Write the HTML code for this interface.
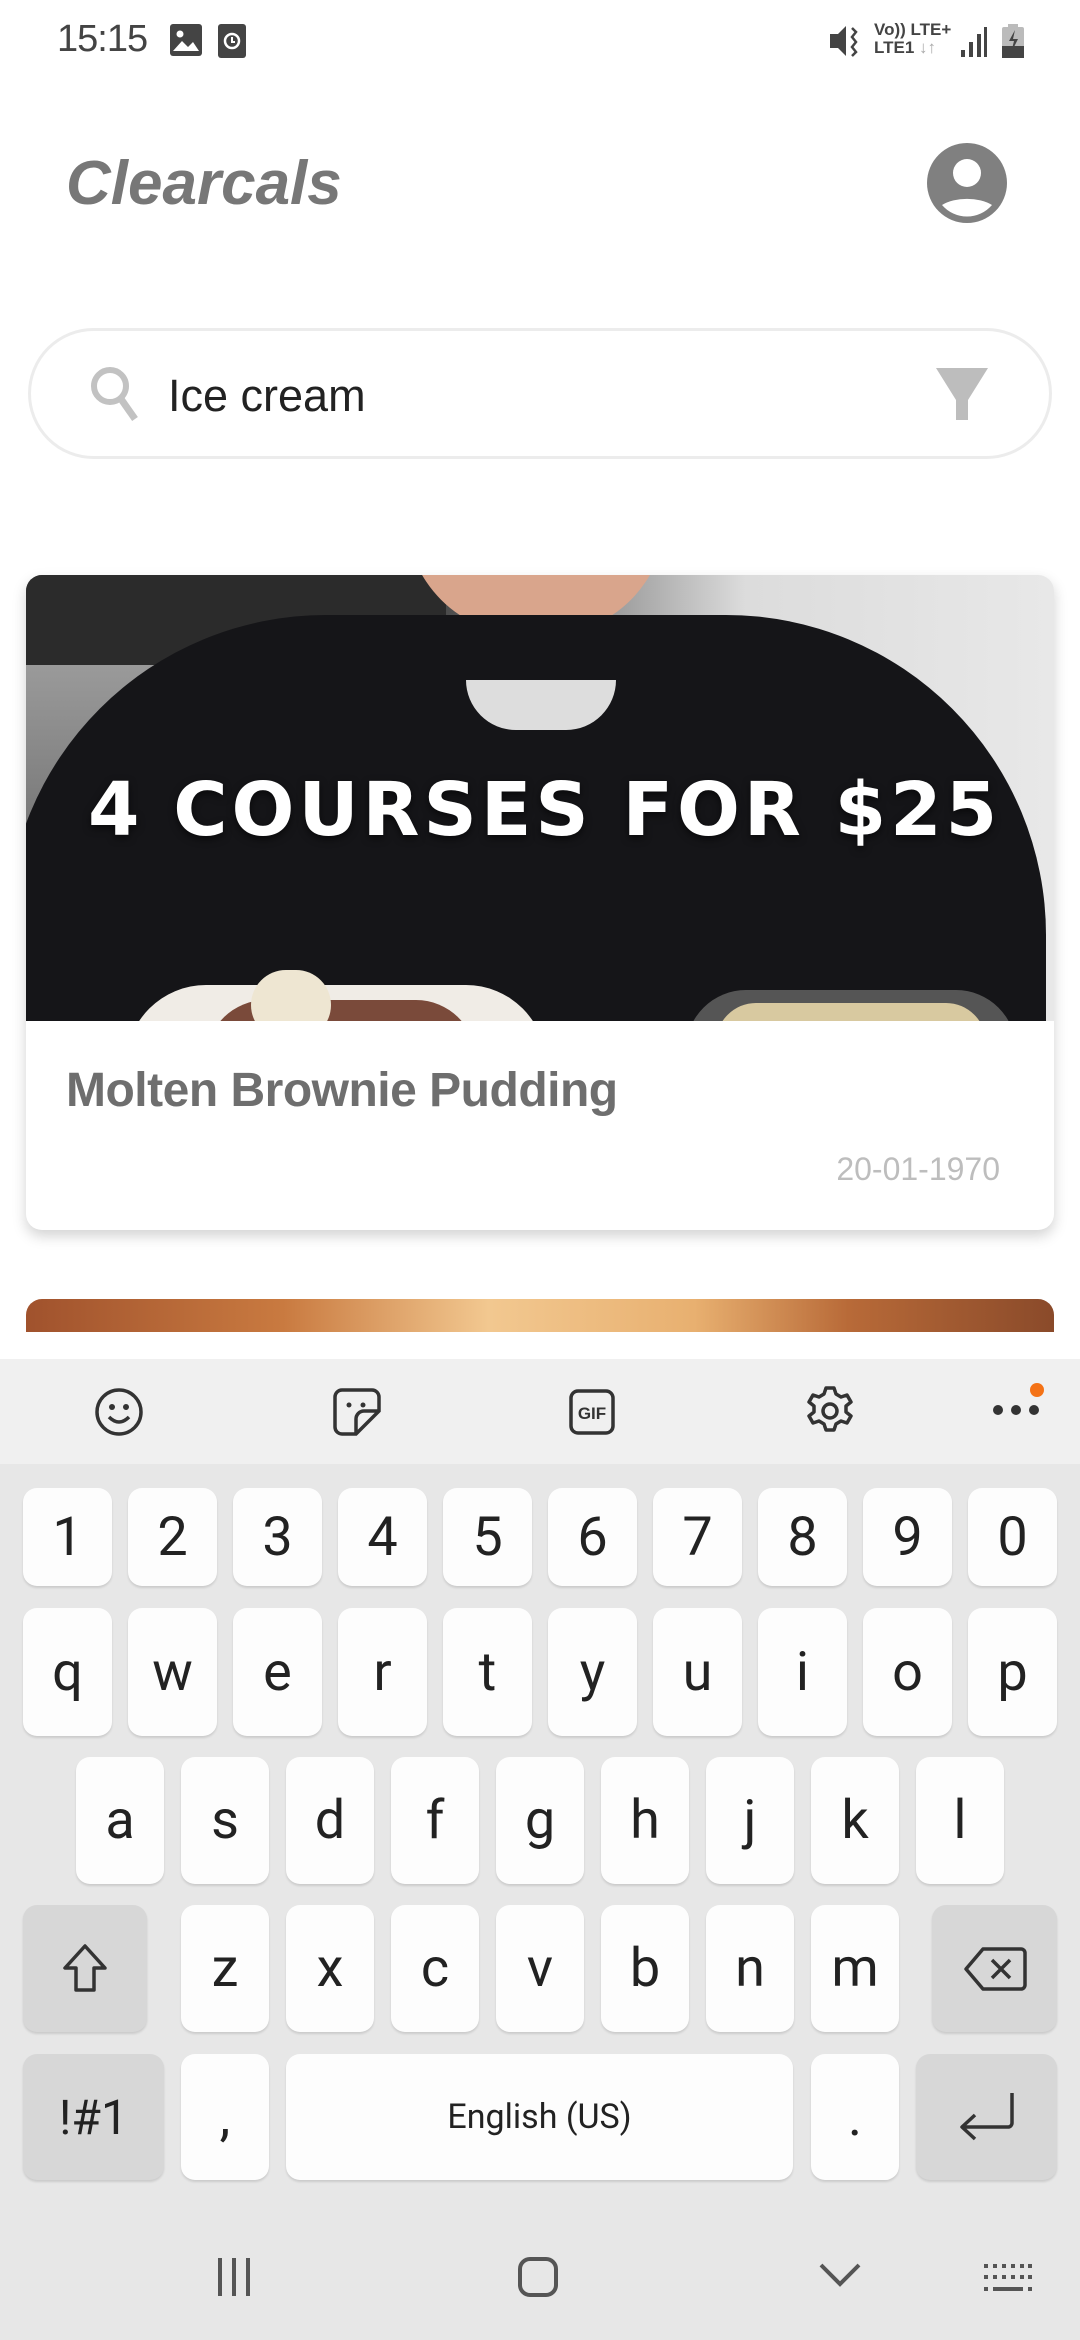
<!DOCTYPE html>
<html><head><meta charset="utf-8"><style>
*{margin:0;padding:0;box-sizing:border-box}
body{width:1080px;height:2340px;background:#fff;position:relative;overflow:hidden;font-family:"Liberation Sans",sans-serif}
.a{position:absolute}
.k{position:absolute;background:#fdfdfd;border-radius:14px;box-shadow:0 2px 2px rgba(0,0,0,.12);color:#222;font-size:54px;display:flex;align-items:center;justify-content:center;font-family:"Roboto","Liberation Sans",sans-serif}
.s{background:#d7d7d7}
</style></head><body>
<!-- status bar -->
<div class="a" style="left:57px;top:18px;font-size:38px;color:#444;letter-spacing:-1px">15:15</div>
<svg class="a" style="left:170px;top:24px" width="32" height="32"><rect width="32" height="32" rx="3" fill="#444"/><circle cx="10" cy="10" r="3.5" fill="#fff"/><path d="M3 27 L12 17 L18 23 L23 18 L29 27Z" fill="#fff"/></svg>
<svg class="a" style="left:218px;top:24px" width="28" height="34"><rect width="28" height="34" rx="3" fill="#444"/><circle cx="14" cy="17" r="7" fill="none" stroke="#fff" stroke-width="2.5"/><path d="M14 13v5h3" stroke="#fff" stroke-width="2" fill="none"/></svg>
<svg class="a" style="left:828px;top:24px" width="34" height="34"><path d="M2 10h8l8-8v30l-8-8H2z" fill="#444"/><path d="M24 4l4 4-4 5 4 5-4 5 4 5-4 4" stroke="#444" stroke-width="2.5" fill="none"/></svg>
<div class="a" style="left:874px;top:21px;font-size:17px;font-weight:bold;color:#444;line-height:18px">Vo)) LTE+<br>LTE1 <span style="color:#aaa">↓↑</span></div>
<svg class="a" style="left:960px;top:26px" width="28" height="32"><rect x="1" y="24" width="4" height="7" fill="#444"/><rect x="9" y="16" width="4" height="15" fill="#444"/><rect x="17" y="8" width="4" height="23" fill="#444"/><rect x="24" y="1" width="3" height="30" fill="#444"/></svg>
<svg class="a" style="left:1002px;top:24px" width="22" height="34"><rect x="6" y="0" width="10" height="4" fill="#bbb"/><rect y="3" width="22" height="31" rx="2" fill="#bbb"/><rect y="22" width="22" height="12" fill="#444"/><path d="M13 6l-6 11h5l-3 12 7-14h-5z" fill="#444"/></svg>
<!-- header -->
<div class="a" style="left:66px;top:148px;font-family:'Liberation Sans',sans-serif;font-style:italic;font-weight:bold;font-size:62px;color:#777">Clearcals</div>
<svg class="a" style="left:927px;top:143px" width="80" height="80"><circle cx="40" cy="40" r="40" fill="#808080"/><circle cx="40" cy="30" r="14" fill="#fff"/><path d="M15 62a36 22 0 0 1 50 0a33 33 0 0 1-50 0z" fill="#fff"/></svg>
<!-- search -->
<div class="a" style="left:28px;top:328px;width:1024px;height:131px;border:3px solid #ececec;border-radius:66px"></div>
<svg class="a" style="left:88px;top:364px" width="60" height="62"><circle cx="22" cy="22" r="16" fill="none" stroke="#c2c2c2" stroke-width="6"/><path d="M33 35l14 20" stroke="#c2c2c2" stroke-width="7"/></svg>
<div class="a" style="left:168px;top:370px;font-size:45px;color:#222">Ice cream</div>
<svg class="a" style="left:934px;top:366px" width="56" height="56"><path d="M2 2h52L34 34v20h-12V34z" fill="#bdbdbd"/></svg>
<!-- card 1 -->
<div class="a" style="left:26px;top:575px;width:1028px;height:655px;border-radius:16px;background:#fff;box-shadow:0 6px 14px rgba(0,0,0,.18);overflow:hidden">
 <div class="a" style="left:0;top:0;width:1028px;height:446px;overflow:hidden;background:linear-gradient(90deg,#555 0,#6a6a6a 22%,#333 36%,#dcdcdc 70%,#e8e8e8 100%)">
  <div class="a" style="left:0;top:0;width:420px;height:90px;background:#2b2b2b"></div>
  <div class="a" style="left:0;top:90px;width:420px;height:170px;background:linear-gradient(#9a9a9a,#777)"></div>
  <div class="a" style="left:120px;top:120px;width:250px;height:70px;background:#3a3a3a"></div>
  <div class="a" style="left:380px;top:-60px;width:260px;height:120px;background:#d9a58c;border-radius:0 0 130px 130px"></div>
  <div class="a" style="left:-20px;top:40px;width:1040px;height:460px;background:#151518;border-radius:320px 320px 0 0"></div>
  <div class="a" style="left:440px;top:105px;width:150px;height:50px;background:#ddd;border-radius:0 0 60px 60px"></div>
  <div class="a" style="left:100px;top:410px;width:420px;height:80px;background:#f0ece6;border-radius:200px 200px 0 0"></div>
  <div class="a" style="left:180px;top:425px;width:270px;height:60px;background:#7a4a3a;border-radius:150px 150px 0 0"></div>
  <div class="a" style="left:225px;top:395px;width:80px;height:70px;background:#eee6d2;border-radius:40px"></div>
  <div class="a" style="left:660px;top:415px;width:330px;height:60px;background:#555;border-radius:170px 170px 0 0"></div>
  <div class="a" style="left:690px;top:428px;width:270px;height:40px;background:#d8c9a0;border-radius:140px 140px 0 0"></div>
 </div>
 <div class="a" style="left:62px;top:192px;font-family:'DejaVu Sans',sans-serif;font-weight:bold;font-size:74px;color:#fff;letter-spacing:4px;white-space:nowrap;text-shadow:0 3px 8px rgba(0,0,0,.6)">4 COURSES FOR $25</div>
 <div class="a" style="left:40px;top:488px;font-size:48px;color:#6e6e6e;font-weight:bold;letter-spacing:-.5px">Molten Brownie Pudding</div>
 <div class="a" style="right:54px;top:576px;font-size:32px;color:#bdbdbd">20-01-1970</div>
</div>
<div class="a" style="left:26px;top:1299px;width:1028px;height:60px;border-radius:16px 16px 0 0;background:linear-gradient(90deg,#a0522d 0,#c97a40 25%,#f2c890 45%,#e8b070 65%,#b86a38 80%,#8a4a2a 100%)"></div>
<!-- keyboard -->
<div class="a" style="left:0;top:1332px;width:1080px;height:27px;background:#fff"></div>
<div class="a" style="left:0;top:1359px;width:1080px;height:105px;background:#f0f0f0"></div>
<div class="a" style="left:0;top:1464px;width:1080px;height:876px;background:#e7e7e7"></div>
<svg class="a" style="left:94px;top:1387px" width="50" height="50"><circle cx="25" cy="25" r="22" fill="none" stroke="#333" stroke-width="3.5"/><circle cx="18" cy="20" r="3" fill="#333"/><circle cx="32" cy="20" r="3" fill="#333"/><path d="M15 30q10 10 20 0" stroke="#333" stroke-width="3.5" fill="none"/></svg>
<svg class="a" style="left:332px;top:1387px" width="50" height="50"><path d="M10 3h30a7 7 0 0 1 7 7v14L24 47H10a7 7 0 0 1-7-7V10a7 7 0 0 1 7-7z M24 47V32a8 8 0 0 1 8-8h15" fill="none" stroke="#333" stroke-width="3.5"/><circle cx="17" cy="18" r="2.5" fill="#333"/><circle cx="31" cy="18" r="2.5" fill="#333"/></svg>
<svg class="a" style="left:569px;top:1389px" width="46" height="46"><rect x="2" y="2" width="42" height="42" rx="7" fill="none" stroke="#333" stroke-width="3.5"/><text x="23" y="30" text-anchor="middle" font-family="Liberation Sans" font-weight="bold" font-size="17" fill="#333">GIF</text></svg>
<svg class="a" style="left:804px;top:1385px" width="52" height="52"><circle cx="26" cy="26" r="7" fill="none" stroke="#333" stroke-width="3.5"/><path d="M22 3h8l2 6 5 3 6-2 4 7-5 4v6l5 4-4 7-6-2-5 3-2 6h-8l-2-6-5-3-6 2-4-7 5-4v-6l-5-4 4-7 6 2 5-3z" fill="none" stroke="#333" stroke-width="3.5" stroke-linejoin="round"/></svg>
<div class="a" style="left:993px;top:1405px;width:10px;height:10px;border-radius:5px;background:#333;box-shadow:18px 0 #333,36px 0 #333"></div>
<div class="a" style="left:1030px;top:1383px;width:14px;height:14px;border-radius:7px;background:#f47216"></div>
<!-- row1 -->
<div class="k" style="left:23px;top:1488px;width:89px;height:98px">1</div>
<div class="k" style="left:128px;top:1488px;width:89px;height:98px">2</div>
<div class="k" style="left:233px;top:1488px;width:89px;height:98px">3</div>
<div class="k" style="left:338px;top:1488px;width:89px;height:98px">4</div>
<div class="k" style="left:443px;top:1488px;width:89px;height:98px">5</div>
<div class="k" style="left:548px;top:1488px;width:89px;height:98px">6</div>
<div class="k" style="left:653px;top:1488px;width:89px;height:98px">7</div>
<div class="k" style="left:758px;top:1488px;width:89px;height:98px">8</div>
<div class="k" style="left:863px;top:1488px;width:89px;height:98px">9</div>
<div class="k" style="left:968px;top:1488px;width:89px;height:98px">0</div>
<!-- row2 -->
<div class="k" style="left:23px;top:1608px;width:89px;height:128px">q</div>
<div class="k" style="left:128px;top:1608px;width:89px;height:128px">w</div>
<div class="k" style="left:233px;top:1608px;width:89px;height:128px">e</div>
<div class="k" style="left:338px;top:1608px;width:89px;height:128px">r</div>
<div class="k" style="left:443px;top:1608px;width:89px;height:128px">t</div>
<div class="k" style="left:548px;top:1608px;width:89px;height:128px">y</div>
<div class="k" style="left:653px;top:1608px;width:89px;height:128px">u</div>
<div class="k" style="left:758px;top:1608px;width:89px;height:128px">i</div>
<div class="k" style="left:863px;top:1608px;width:89px;height:128px">o</div>
<div class="k" style="left:968px;top:1608px;width:89px;height:128px">p</div>
<!-- row3 -->
<div class="k" style="left:76px;top:1757px;width:88px;height:127px">a</div>
<div class="k" style="left:181px;top:1757px;width:88px;height:127px">s</div>
<div class="k" style="left:286px;top:1757px;width:88px;height:127px">d</div>
<div class="k" style="left:391px;top:1757px;width:88px;height:127px">f</div>
<div class="k" style="left:496px;top:1757px;width:88px;height:127px">g</div>
<div class="k" style="left:601px;top:1757px;width:88px;height:127px">h</div>
<div class="k" style="left:706px;top:1757px;width:88px;height:127px">j</div>
<div class="k" style="left:811px;top:1757px;width:88px;height:127px">k</div>
<div class="k" style="left:916px;top:1757px;width:88px;height:127px">l</div>
<!-- row4 -->
<div class="k s" style="left:23px;top:1905px;width:124px;height:127px"><svg width="50" height="54"><path d="M25 4L5 26h11v22h18V26h11z" fill="none" stroke="#333" stroke-width="3.5" stroke-linejoin="round"/></svg></div>
<div class="k" style="left:181px;top:1905px;width:88px;height:127px">z</div>
<div class="k" style="left:286px;top:1905px;width:88px;height:127px">x</div>
<div class="k" style="left:391px;top:1905px;width:88px;height:127px">c</div>
<div class="k" style="left:496px;top:1905px;width:88px;height:127px">v</div>
<div class="k" style="left:601px;top:1905px;width:88px;height:127px">b</div>
<div class="k" style="left:706px;top:1905px;width:88px;height:127px">n</div>
<div class="k" style="left:811px;top:1905px;width:88px;height:127px">m</div>
<div class="k s" style="left:932px;top:1905px;width:125px;height:127px"><svg width="64" height="46"><path d="M20 3h38a4 4 0 0 1 4 4v32a4 4 0 0 1-4 4H20L3 23z" fill="none" stroke="#333" stroke-width="3.5" stroke-linejoin="round"/><path d="M29 14l18 18M47 14L29 32" stroke="#333" stroke-width="3.5"/></svg></div>
<!-- row5 -->
<div class="k s" style="left:23px;top:2054px;width:141px;height:126px;font-size:48px">!#1</div>
<div class="k" style="left:181px;top:2054px;width:88px;height:126px">,</div>
<div class="k" style="left:286px;top:2054px;width:507px;height:126px;font-size:34px">English (US)</div>
<div class="k" style="left:811px;top:2054px;width:88px;height:126px">.</div>
<div class="k s" style="left:916px;top:2054px;width:141px;height:126px"><svg width="60" height="54"><path d="M55 3v30a4 4 0 0 1-4 4H6M18 25L5 37l13 12" fill="none" stroke="#333" stroke-width="3.5" stroke-linejoin="round"/></svg></div>
<!-- nav -->
<div class="a" style="left:218px;top:2258px;width:4px;height:38px;background:#555;box-shadow:14px 0 #555,28px 0 #555"></div>
<div class="a" style="left:518px;top:2257px;width:40px;height:40px;border:4px solid #555;border-radius:12px"></div>
<svg class="a" style="left:818px;top:2262px" width="44" height="26"><path d="M3 3l19 19 19-19" fill="none" stroke="#555" stroke-width="4"/></svg>
<svg class="a" style="left:984px;top:2262px" width="48" height="34"><g fill="#555"><rect x="0" y="2" width="4" height="4"/><rect x="9" y="2" width="4" height="4"/><rect x="18" y="2" width="4" height="4"/><rect x="27" y="2" width="4" height="4"/><rect x="36" y="2" width="4" height="4"/><rect x="44" y="2" width="4" height="4"/><rect x="0" y="13" width="4" height="4"/><rect x="9" y="13" width="4" height="4"/><rect x="18" y="13" width="4" height="4"/><rect x="27" y="13" width="4" height="4"/><rect x="36" y="13" width="4" height="4"/><rect x="44" y="13" width="4" height="4"/><rect x="0" y="25" width="4" height="4"/><rect x="9" y="25" width="30" height="4"/><rect x="44" y="25" width="4" height="4"/></g></svg>
</body></html>
